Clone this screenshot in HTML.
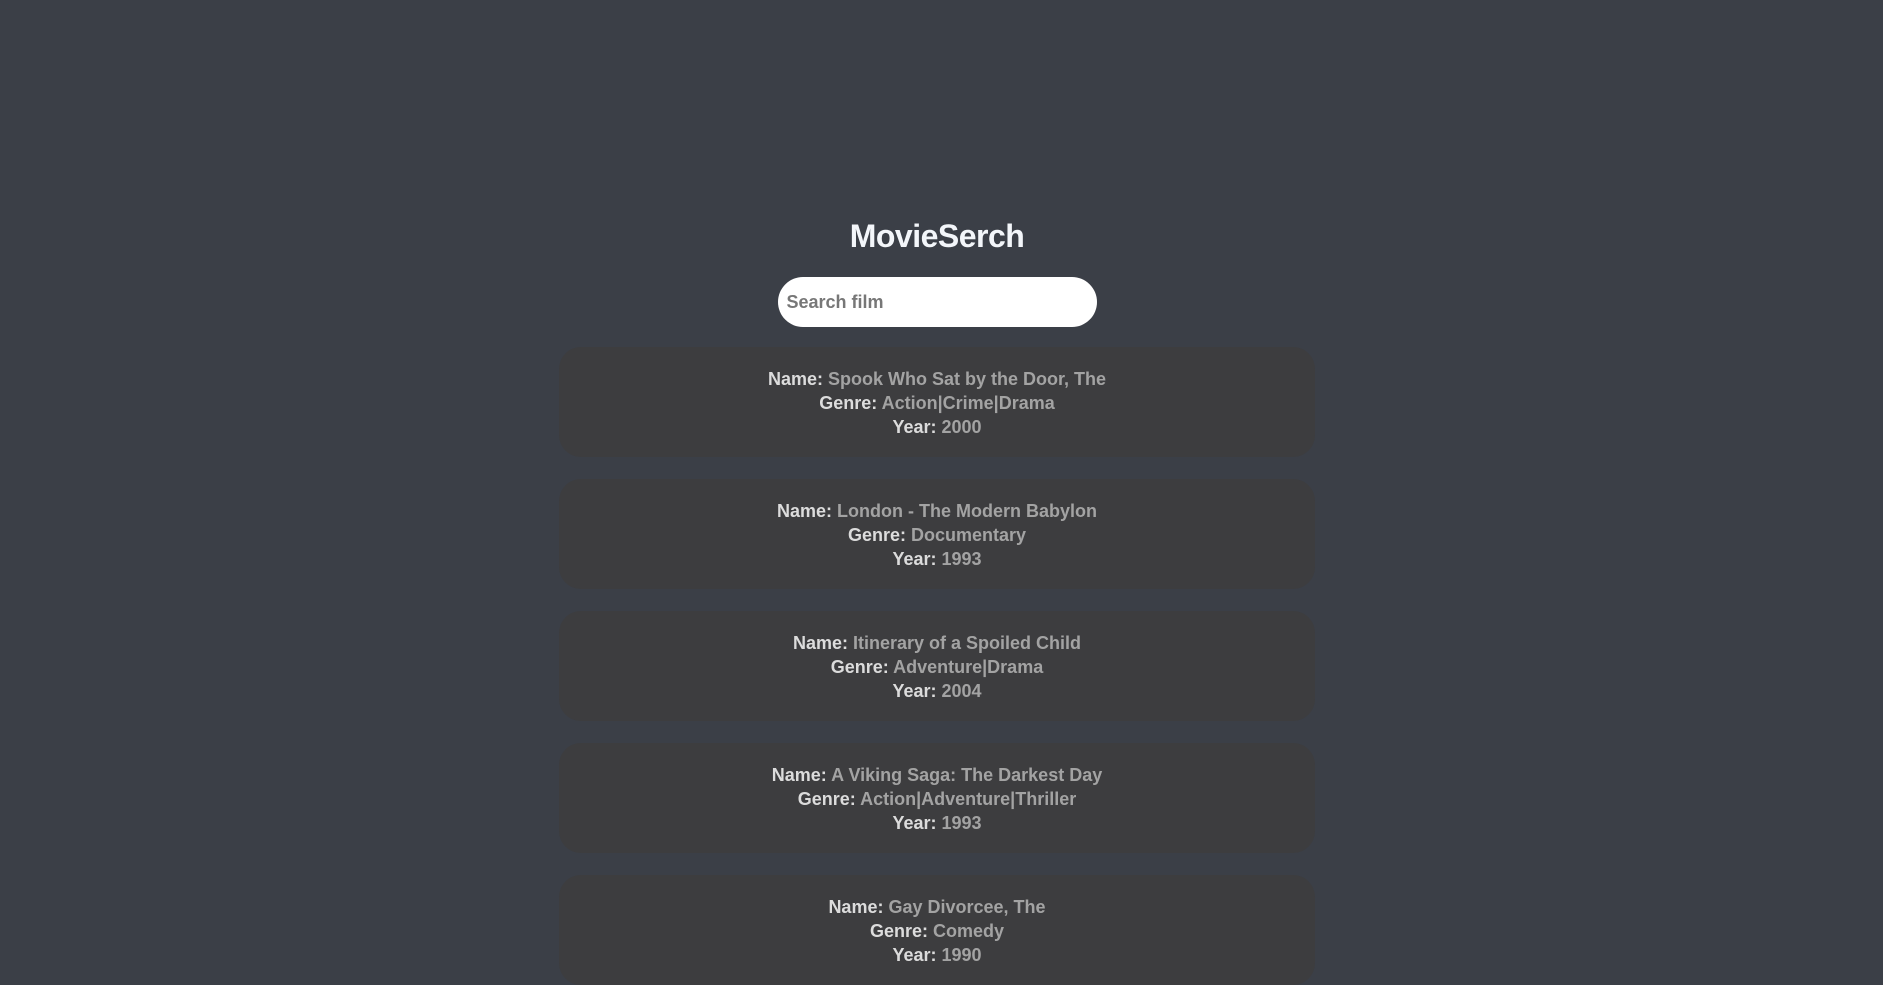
<!DOCTYPE html>
<html><head><meta charset="utf-8"><style>
html,body{margin:0;padding:0;}
body{background:#3b3f47;width:1883px;height:916px;overflow:hidden;font-family:"Liberation Sans",sans-serif;}
.wrap{width:1874px;text-align:center;}
h1{margin:0;padding-top:217px;height:60px;font-size:32px;color:#f3f6fa;font-weight:bold;line-height:38px;letter-spacing:-0.5px;}
.search{display:block;margin:0 auto;width:319px;height:50px;border-radius:25px;background:#fff;box-sizing:border-box;padding-left:9px;text-align:left;font-size:18px;font-weight:bold;color:#777;line-height:50px;}
.list{margin-top:20px;}
.card{width:756px;height:110px;margin:0 auto 22px;background:#3d3d3f;border-radius:22px;box-sizing:border-box;padding-top:20px;font-size:18px;font-weight:bold;line-height:24px;color:#dcdcdc;}
.card span{color:#a3a3a3;}
</style></head><body><div class="wrap">
<h1>MovieSerch</h1>
<div class="search">Search film</div>
<div class="list">
<div class="card">Name: <span>Spook Who Sat by the Door, The</span><br>Genre: <span>Action|Crime|Drama</span><br>Year: <span>2000</span></div>
<div class="card">Name: <span>London - The Modern Babylon</span><br>Genre: <span>Documentary</span><br>Year: <span>1993</span></div>
<div class="card">Name: <span>Itinerary of a Spoiled Child</span><br>Genre: <span>Adventure|Drama</span><br>Year: <span>2004</span></div>
<div class="card">Name: <span>A Viking Saga: The Darkest Day</span><br>Genre: <span>Action|Adventure|Thriller</span><br>Year: <span>1993</span></div>
<div class="card">Name: <span>Gay Divorcee, The</span><br>Genre: <span>Comedy</span><br>Year: <span>1990</span></div>
</div></div></body></html>
